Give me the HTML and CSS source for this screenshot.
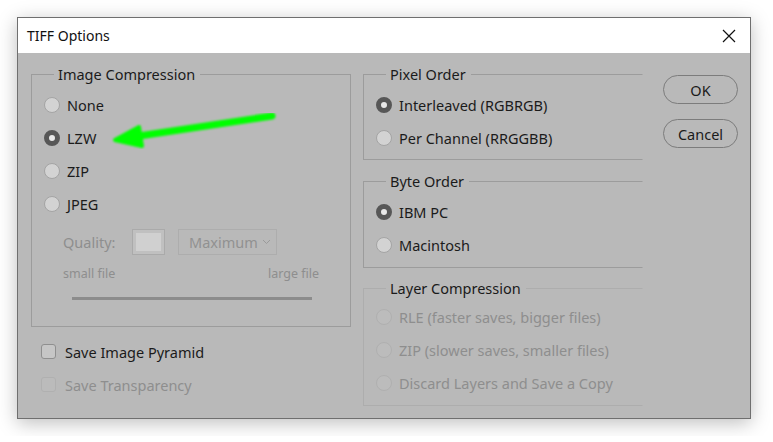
FILE: index.html
```html
<!DOCTYPE html>
<html lang="en">
<head>
<meta charset="utf-8">
<title>TIFF Options</title>
<link rel="stylesheet" href="styles.css">
</head>
<body>
<div class="page">
  <div class="dialog">
    <div class="titlebar">
      <span class="title">TIFF Options</span>
      <span class="close" aria-label="Close">
        <svg width="14" height="14" viewBox="0 0 14 14"><path d="M1 1 L13 13 M13 1 L1 13" stroke="#111" stroke-width="1.2" fill="none"/></svg>
      </span>
    </div>
    <div class="content">
      <div class="col-left">
        <fieldset class="group group-image">
          <legend>Image Compression</legend>
          <label class="option"><span class="radio"></span>None</label>
          <label class="option"><span class="radio checked"></span>LZW</label>
          <label class="option"><span class="radio"></span>ZIP</label>
          <label class="option"><span class="radio"></span>JPEG</label>
          <div class="quality">
            <span class="q-label">Quality:</span>
            <span class="q-box"></span>
            <span class="q-select">Maximum
              <svg width="9" height="6" viewBox="0 0 9 6"><path d="M1 1 L4.5 4.5 L8 1" stroke="#9a9a9a" stroke-width="1" fill="none"/></svg>
            </span>
          </div>
          <div class="scale"><span>small file</span><span>large file</span></div>
          <div class="slider"></div>
        </fieldset>
        <label class="check"><span class="box"></span>Save Image Pyramid</label>
        <label class="check disabled"><span class="box"></span>Save Transparency</label>
      </div>
      <div class="col-right">
        <fieldset class="group group-pixel">
          <legend>Pixel Order</legend>
          <label class="option"><span class="radio checked"></span>Interleaved (RGBRGB)</label>
          <label class="option"><span class="radio"></span>Per Channel (RRGGBB)</label>
        </fieldset>
        <fieldset class="group group-byte">
          <legend>Byte Order</legend>
          <label class="option"><span class="radio checked"></span>IBM PC</label>
          <label class="option"><span class="radio"></span>Macintosh</label>
        </fieldset>
        <fieldset class="group group-layer disabled">
          <legend>Layer Compression</legend>
          <label class="option"><span class="radio"></span>RLE (faster saves, bigger files)</label>
          <label class="option"><span class="radio"></span>ZIP (slower saves, smaller files)</label>
          <label class="option"><span class="radio"></span>Discard Layers and Save a Copy</label>
        </fieldset>
      </div>
      <div class="col-buttons">
        <button class="btn">OK</button>
        <button class="btn">Cancel</button>
      </div>
    </div>
    <svg class="arrow" width="170" height="50" viewBox="0 0 170 50">
      <defs><filter id="soft"><feGaussianBlur stdDeviation="0.9"/></filter></defs>
      <g filter="url(#soft)" fill="#00ff00" stroke="#00ff00" stroke-linecap="round" stroke-linejoin="round">
        <path d="M161 10 L28 30" stroke-width="7" fill="none"/>
        <path d="M4 34 L28 21 L31 40 Z" stroke-width="4"/>
      </g>
    </svg>
  </div>
</div>
</body>
</html>
```
FILE: styles.css
```css
* { box-sizing: border-box; }

html, body {
  margin: 0;
  background: #ffffff;
}

body {
  font-family: "Noto Sans", "Open Sans", "Liberation Sans", sans-serif;
  font-size: 14px;
  color: #1b1b1b;
}

.page {
  padding: 17px;
}

.dialog {
  position: relative;
  width: 734px;
  height: 402px;
  border: 1px solid #6f6f6f;
  background: #b9b9b9;
  box-shadow: 0 4px 18px rgba(0, 0, 0, 0.26);
  display: flex;
  flex-direction: column;
}

.titlebar {
  height: 35px;
  background: #ffffff;
  display: flex;
  align-items: center;
  justify-content: space-between;
  padding: 0 14px 0 9px;
  flex: none;
}

.title {
  font-size: 14px;
  color: #111;
}

.close {
  display: flex;
  width: 14px;
  height: 14px;
}

.content {
  display: grid;
  grid-template-columns: 320px 280px 75px;
  column-gap: 12px;
  padding: 11px 0 0 13px;
}

.col-buttons {
  margin-left: 8px;
  display: flex;
  flex-direction: column;
  gap: 15px;
  padding-top: 11px;
}

.btn {
  width: 75px;
  height: 29px;
  border: 1px solid #7c7c7c;
  border-radius: 15px;
  background: #b9b9b9;
  font: inherit;
  font-size: 14.5px;
  color: #1b1b1b;
  padding: 0;
}

/* group boxes */
.group {
  margin: 0;
  border: 1px solid #9c9c9c;
  padding: 0 0 0 12px;
  min-width: 0;
}

.group legend {
  margin-left: 10px;
  padding: 0 5px 0 4px;
  font-size: 14.5px;
  line-height: 20px;
  color: #1b1b1b;
}

.col-right .group {
  border-right-color: transparent;
}

.group-image {
  height: 263px;
  padding-left: 12px;
}

.group-pixel { height: 96px; margin-bottom: 11px; }
.group-byte { height: 97px; margin-bottom: 11px; }
.group-layer { height: 128px; border-color: #adadad; margin-top: -1px; }

.option {
  display: flex;
  align-items: center;
  height: 33px;
  gap: 7px;
  font-size: 14.5px;
}

.group .option:first-of-type { margin-top: 4px; }
.group-layer .option:first-of-type { margin-top: 2px; }

.radio {
  width: 16px;
  height: 16px;
  border-radius: 50%;
  border: 1px solid #a4a4a4;
  background: #d3d3d3;
  flex: none;
}

.radio.checked {
  border: 5px solid #575757;
  background: #e8e8e8;
}

.disabled .option { color: #8e8e8e; }
.disabled .radio { background: #bcbcbc; border-color: #b0b0b0; }

/* JPEG quality controls, shown disabled */
.quality {
  display: flex;
  align-items: center;
  margin: 8px 0 0 19px;
  height: 27px;
  color: #8e8e8e;
}

.q-label { width: 69px; font-size: 14.5px; }

.q-box {
  width: 33px;
  height: 26px;
  border: 1px solid #aaaaaa;
  background: #d0d0d0;
  margin-right: 13px;
  box-shadow: inset 0 0 0 3px #c0c0c0;
}

.q-select {
  width: 99px;
  height: 26px;
  border: 1px solid #adadad;
  display: flex;
  align-items: center;
  justify-content: space-between;
  padding: 0 5px 0 10px;
  font-size: 14.5px;
  color: #919191;
}

.scale {
  display: flex;
  justify-content: space-between;
  margin: 8px 31px 0 19px;
  font-size: 12.5px;
  color: #8e8e8e;
  height: 22px;
  line-height: 22px;
}

.slider {
  margin: 12px 0 0 28px;
  width: 240px;
  height: 3px;
  background: #8c8c8c;
}

/* checkboxes below the compression group */
.check {
  display: flex;
  align-items: center;
  gap: 9px;
  height: 33px;
  padding-left: 10px;
  font-size: 14.5px;
}

.check:first-of-type { margin-top: 8px; }

.check .box {
  width: 15px;
  height: 15px;
  border: 1px solid #8f8f8f;
  border-radius: 3px;
  background: #c6c6c6;
}

.check.disabled { color: #8e8e8e; }
.check.disabled .box { border-color: #b0b0b0; background: #bbbbbb; }

/* annotation arrow drawn over the dialog */
.arrow {
  position: absolute;
  left: 93px;
  top: 88px;
}
```
